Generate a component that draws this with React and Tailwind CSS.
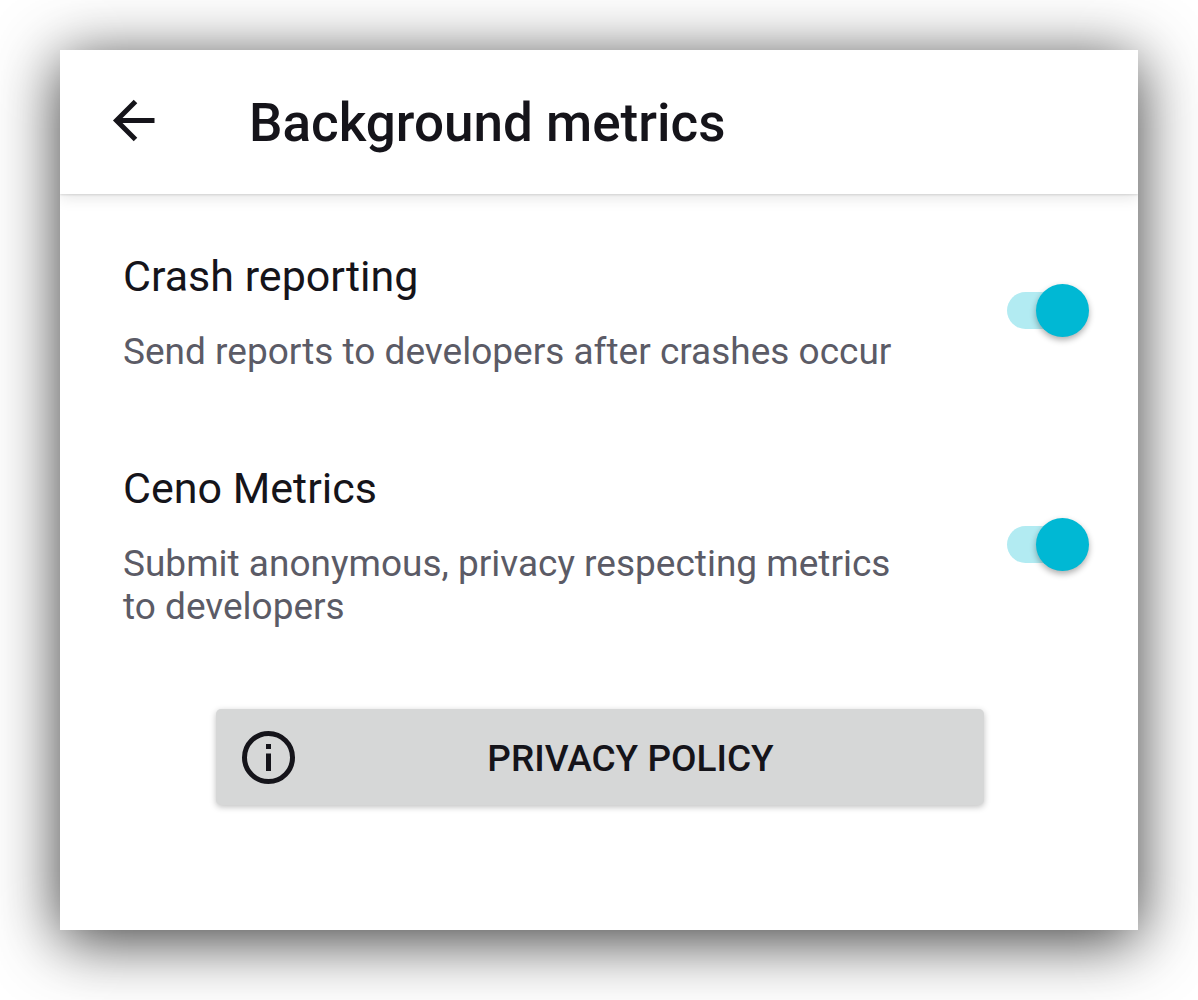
import { useState } from "react";

function Toggle({ id }) {
  const [on, setOn] = useState(true);
  return (
    <span className="relative mb-[3px] flex h-[53px] w-[83px] shrink-0 items-center">
      <input
        id={id}
        type="checkbox"
        role="switch"
        checked={on}
        onChange={() => setOn(!on)}
        className="peer ml-px h-[37px] w-[75px] cursor-pointer appearance-none rounded-full bg-gray-300 checked:bg-[#b2ebf2]"
      />
      <span className="pointer-events-none absolute left-0 top-0 size-[53px] rounded-full bg-gray-100 shadow-[0_3px_6px_rgba(0,0,0,0.32)] peer-checked:left-[30px] peer-checked:bg-[#00b8d4]" />
    </span>
  );
}

function Setting({ id, title, children }) {
  return (
    <div className="flex items-center justify-between gap-12">
      <label htmlFor={id} className="max-w-[780px]">
        <span className="block text-[43px] leading-[50px] text-[#15141a]">{title}</span>
        <span className="mt-[29px] block text-[37px] leading-[43px] text-[#5b5b66]">{children}</span>
      </label>
      <Toggle id={id} />
    </div>
  );
}

export default function App() {
  return (
    <div className="min-h-screen bg-white px-[60px] pt-[50px] pb-[70px] font-['Roboto',sans-serif]">
      <main className="min-h-[880px] overflow-hidden bg-white shadow-[0_10px_60px_rgba(0,0,0,0.78)]">
        <header className="flex h-[144px] items-start gap-[93px] px-[52px] pt-[43px] shadow-[0_1px_2px_rgba(0,0,0,0.12),0_4px_14px_rgba(0,0,0,0.1)]">
          <button type="button" aria-label="Back" className="pt-[6px]">
            <svg viewBox="0 0 44 44" className="size-[44px]" fill="none" stroke="#15141a" strokeWidth="5">
              <path d="M42.5 21.5H4M23.5 2.5L4.5 21.5l19 19" />
            </svg>
          </button>
          <h1 className="text-[53px] font-medium leading-[60px] text-[#15141a]">Background metrics</h1>
        </header>
        <div className="flex flex-col gap-[90px] pt-[57px] pr-[49px] pl-[63px]">
          <Setting id="crash" title="Crash reporting">Send reports to developers after crashes occur</Setting>
          <Setting id="metrics" title="Ceno Metrics">Submit anonymous, privacy respecting metrics to developers</Setting>
        </div>
        <div className="pr-[154px] pl-[156px] pt-[81px]">
          <button type="button" className="flex h-[96px] w-full items-center rounded-[5px] bg-[#d6d7d7] pr-[18px] pl-[26px] text-[#15141a] shadow-[0_2px_6px_rgba(0,0,0,0.25)]">
            <svg viewBox="0 0 53 53" className="size-[53px] shrink-0" fill="none" stroke="currentColor" strokeWidth="5">
              <circle cx="26.5" cy="26.5" r="24" />
              <path d="M26.5 22.5v17.5M26.5 13v5" />
            </svg>
            <span className="flex-1 pt-[4px] text-[37px] font-medium leading-[44px]">PRIVACY POLICY</span>
          </button>
        </div>
      </main>
    </div>
  );
}
